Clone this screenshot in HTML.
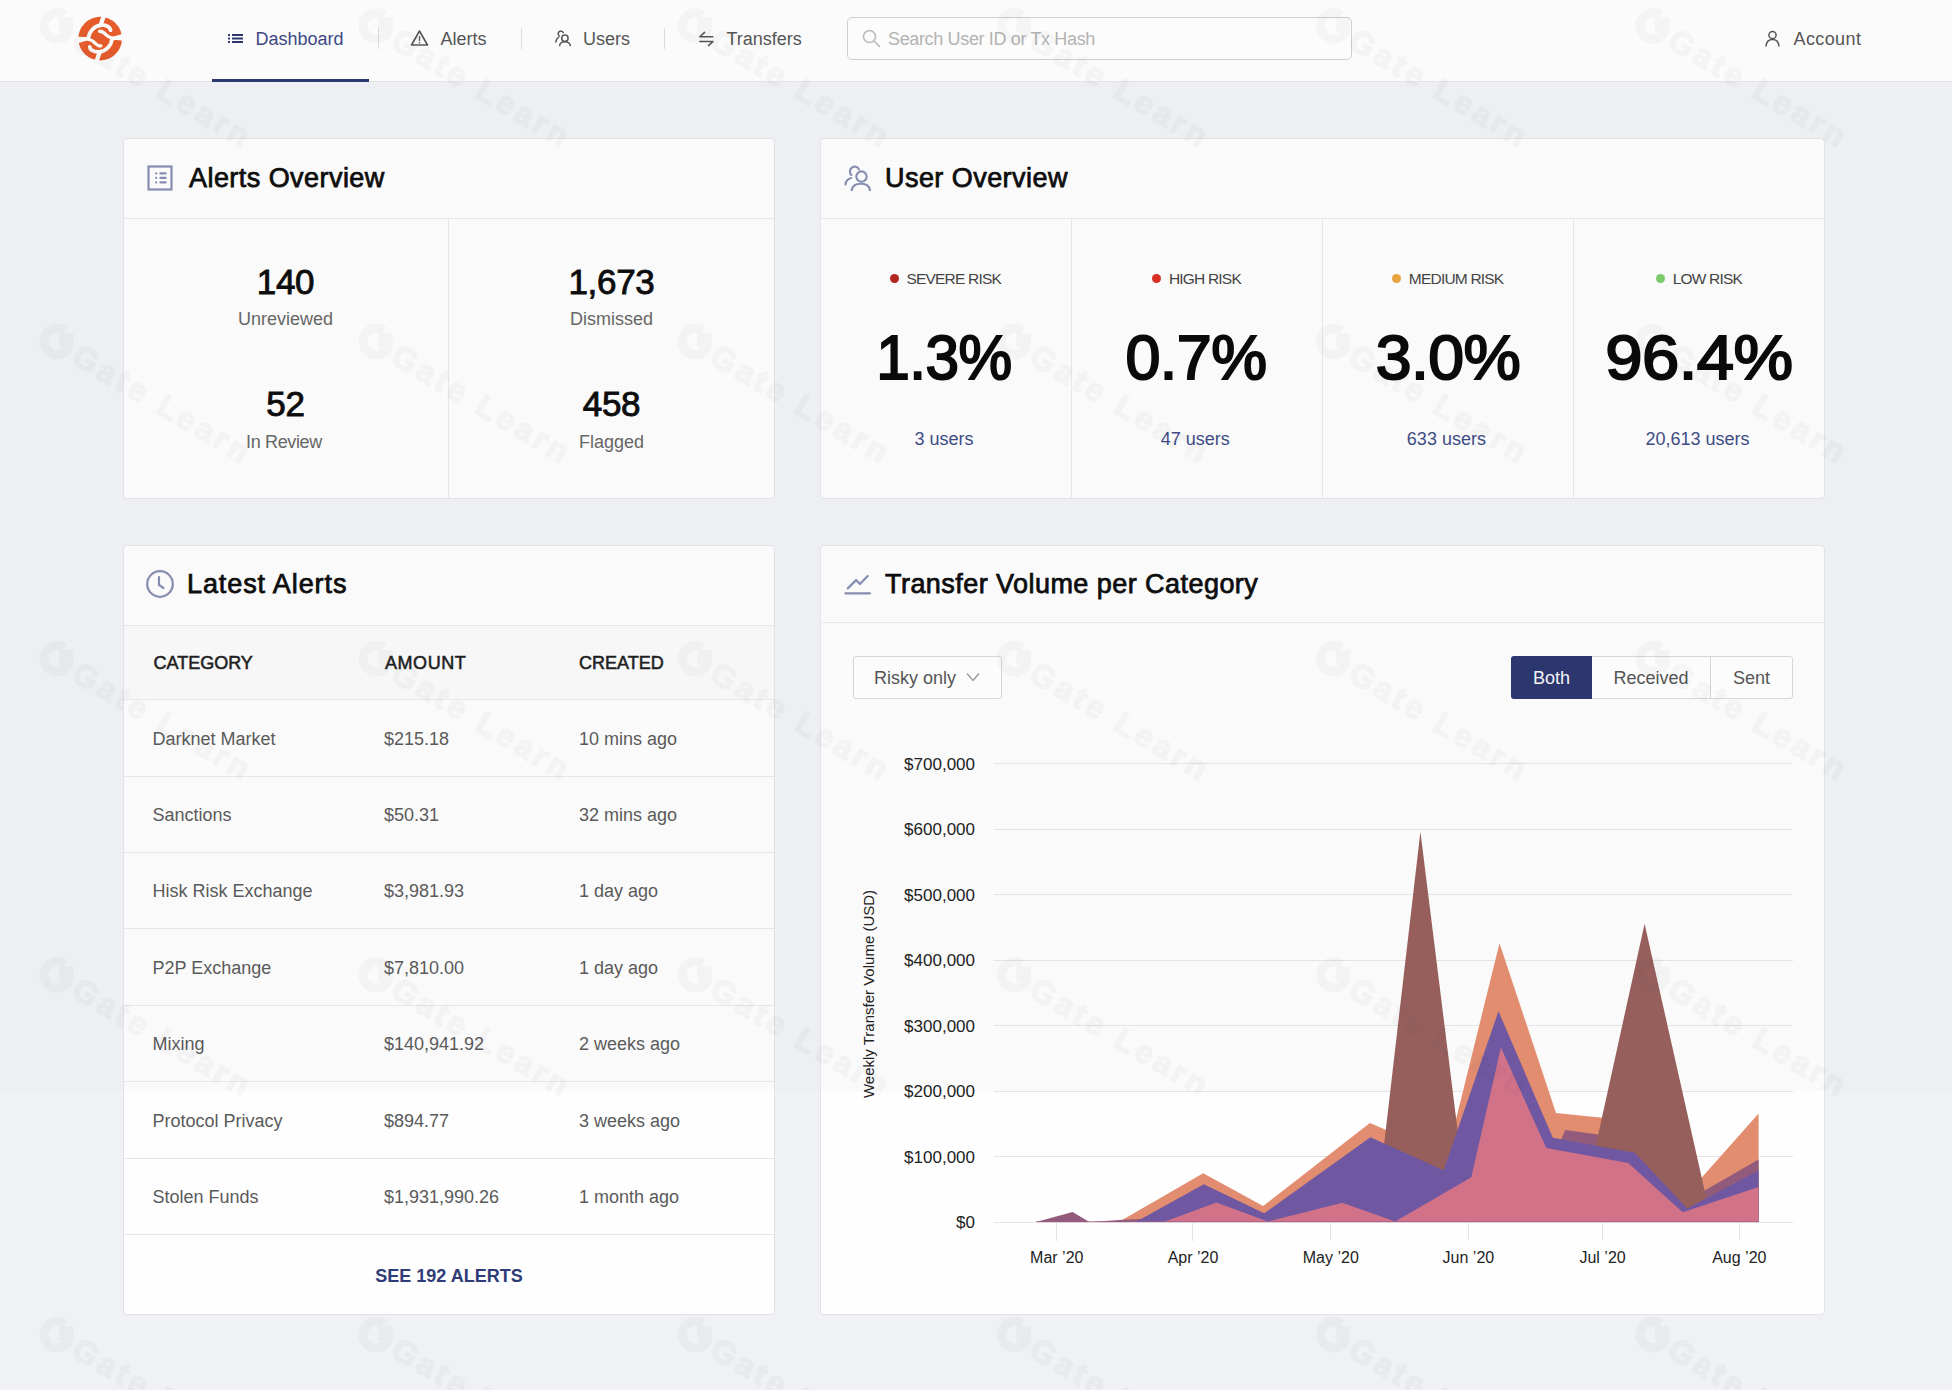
<!DOCTYPE html>
<html><head><meta charset="utf-8"><style>
html,body{margin:0;padding:0;}
body{width:1952px;height:1390px;overflow:hidden;position:relative;background:linear-gradient(#eeeff2 0 1090px, #f0f1f4 1090px);font-family:"Liberation Sans", sans-serif;}
.t{position:absolute;white-space:nowrap;font-family:"Liberation Sans", sans-serif;}
.r{position:absolute;}
</style></head><body>
<div class="r" style="left:0px;top:0px;width:1952px;height:81px;background:#fbfbfb;"></div>
<div class="r" style="left:0px;top:81px;width:1952px;height:1px;background:#e3e4e7;"></div>
<div class="r" style="left:212px;top:79px;width:157px;height:3px;background:#2c3770;"></div>
<svg class="r" style="left:76px;top:14px;width:48px;height:48px" viewBox="0 0 1390 1390">
<circle cx="700" cy="712" r="632" fill="#e55b2b"/>
<g fill="none" stroke="#fbfbfb" stroke-linecap="round"><path d="M805 50 L722 300" stroke-width="125"/>
<path d="M0 810 L360 700 C370 520 520 350 730 325 C880 315 990 380 1000 470" stroke-width="108"/>
<path d="M680 500 C770 490 830 560 890 620 C960 690 1100 725 1400 715" stroke-width="95"/><g transform="rotate(180 700 712)"><path d="M805 50 L722 300" stroke-width="125"/>
<path d="M0 810 L360 700 C370 520 520 350 730 325 C880 315 990 380 1000 470" stroke-width="108"/>
<path d="M680 500 C770 490 830 560 890 620 C960 690 1100 725 1400 715" stroke-width="95"/></g></g>
</svg>
<svg class="r" style="left:228px;top:33px;width:16px;height:11px" viewBox="0 0 16 11">
<g fill="#2c3770"><rect x="0" y="1" width="2" height="2"/><rect x="0" y="4.5" width="2" height="2"/><rect x="0" y="8" width="2" height="2"/>
<rect x="4" y="1" width="11" height="2"/><rect x="4" y="4.5" width="11" height="2"/><rect x="4" y="8" width="11" height="2"/></g></svg>
<div class="t" style="top:29.86px;font-size:18px;line-height:18px;color:#3b4883;font-weight:400;left:255.50px;">Dashboard</div>
<div class="r" style="left:378px;top:28px;width:1px;height:21px;background:#dcdcdc;"></div>
<svg class="r" style="left:410px;top:29px;width:19px;height:18px" viewBox="0 0 19 18">
<path d="M9.5 2 L17.5 16 L1.5 16 Z" fill="none" stroke="#555" stroke-width="1.6" stroke-linejoin="round"/>
<rect x="8.8" y="7" width="1.4" height="5" fill="#555"/><rect x="8.8" y="13" width="1.4" height="1.4" fill="#555"/></svg>
<div class="t" style="top:30.26px;font-size:18px;line-height:18px;color:#555;font-weight:400;left:440.50px;">Alerts</div>
<div class="r" style="left:521px;top:28px;width:1px;height:21px;background:#dcdcdc;"></div>
<svg class="r" style="left:554px;top:29px;width:19px;height:18px" viewBox="0 0 19 18">
<g fill="none" stroke="#555" stroke-width="1.5" stroke-linecap="round">
<path d="M9.3 3.6 A2.7 2.7 0 1 0 5.2 6.9"/><path d="M1.7 13 C2.3 10.6 3.3 9 4.7 8.2"/>
<circle cx="10.9" cy="9.2" r="3.2"/><path d="M5.6 16.6 C6 13.9 8 12.7 10.9 12.7 C13.8 12.7 15.8 13.9 16.3 16.6"/></g></svg>
<div class="t" style="top:29.86px;font-size:18px;line-height:18px;color:#555;font-weight:400;left:583.00px;">Users</div>
<div class="r" style="left:664px;top:28px;width:1px;height:21px;background:#dcdcdc;"></div>
<svg class="r" style="left:698px;top:30px;width:17px;height:17px" viewBox="0 0 17 17">
<g fill="none" stroke="#555" stroke-width="1.5" stroke-linecap="round" stroke-linejoin="round">
<path d="M6.6 2.4 L1.8 6.8 H14.9"/><path d="M10.5 15.6 L14.9 11.6 H1.8"/></g></svg>
<div class="t" style="top:29.86px;font-size:18px;line-height:18px;color:#555;font-weight:400;left:726.50px;">Transfers</div>
<div class="r" style="left:847px;top:17px;width:505px;height:43px;background:#fcfcfc;border:1px solid #cfcfcf;box-sizing:border-box;border-radius:5px;"></div>
<svg class="r" style="left:861px;top:28px;width:22px;height:22px" viewBox="0 0 22 22">
<g fill="none" stroke="#b9b9b9" stroke-width="1.6" stroke-linecap="round"><circle cx="8.5" cy="8.5" r="6"/><path d="M13 13 L18.5 18.5"/></g></svg>
<div class="t" style="top:29.86px;font-size:18px;line-height:18px;color:#b3b3b3;font-weight:400;letter-spacing:-0.35px;left:888.00px;">Search User ID or Tx Hash</div>
<svg class="r" style="left:1763px;top:29px;width:19px;height:18px" viewBox="0 0 19 18">
<g fill="none" stroke="#555" stroke-width="1.5" stroke-linecap="round"><circle cx="9.5" cy="6" r="3.6"/><path d="M3 17 C3.5 12.5 6 10.5 9.5 10.5 C13 10.5 15.5 12.5 16 17"/></g></svg>
<div class="t" style="top:29.86px;font-size:18px;line-height:18px;color:#555;font-weight:400;letter-spacing:0.4px;left:1793.50px;">Account</div>
<div class="r" style="left:123px;top:138px;width:652px;height:361px;background:#fafafa;border:1px solid #e2e3e6;box-sizing:border-box;border-radius:4px;"></div>
<div class="r" style="left:124px;top:218px;width:650px;height:1px;background:#e6e7e9;"></div>
<div class="r" style="left:448px;top:219px;width:1px;height:279px;background:#e6e7e9;"></div>
<svg class="r" style="left:146px;top:164px;width:28px;height:28px" viewBox="0 0 28 28">
<rect x="2.5" y="2.5" width="23" height="23" fill="none" stroke="#868db0" stroke-width="2.2"/>
<g stroke="#868db0" stroke-width="2.1" stroke-linecap="round"><path d="M10.1 9.4 h0.1 M10.1 13.9 h0.1 M10.1 18.4 h0.1"/><path d="M14.4 9.4 H19.7 M14.4 13.9 H19.7 M14.4 18.4 H19.7"/></g></svg>
<div class="t" style="top:164.54px;font-size:27px;line-height:27px;color:#0d0d0d;font-weight:400;letter-spacing:0.45px;left:189.00px;-webkit-text-stroke:0.75px #0d0d0d;">Alerts Overview</div>
<div class="t" style="top:264.07px;font-size:35px;line-height:35px;color:#0d0d0d;font-weight:400;letter-spacing:-0.3px;left:135.50px;width:300px;text-align:center;-webkit-text-stroke:0.9px #0d0d0d;">140</div>
<div class="t" style="top:309.76px;font-size:18px;line-height:18px;color:#666;font-weight:400;left:135.50px;width:300px;text-align:center;">Unreviewed</div>
<div class="t" style="top:264.07px;font-size:35px;line-height:35px;color:#0d0d0d;font-weight:400;letter-spacing:-0.3px;left:461.50px;width:300px;text-align:center;-webkit-text-stroke:0.9px #0d0d0d;">1,673</div>
<div class="t" style="top:309.76px;font-size:18px;line-height:18px;color:#666;font-weight:400;left:461.50px;width:300px;text-align:center;">Dismissed</div>
<div class="t" style="top:386.47px;font-size:35px;line-height:35px;color:#0d0d0d;font-weight:400;letter-spacing:-0.3px;left:135.50px;width:300px;text-align:center;-webkit-text-stroke:0.9px #0d0d0d;">52</div>
<div class="t" style="top:432.76px;font-size:18px;line-height:18px;color:#666;font-weight:400;letter-spacing:-0.35px;left:134.00px;width:300px;text-align:center;">In Review</div>
<div class="t" style="top:386.47px;font-size:35px;line-height:35px;color:#0d0d0d;font-weight:400;letter-spacing:-0.3px;left:461.50px;width:300px;text-align:center;-webkit-text-stroke:0.9px #0d0d0d;">458</div>
<div class="t" style="top:432.76px;font-size:18px;line-height:18px;color:#666;font-weight:400;left:461.50px;width:300px;text-align:center;">Flagged</div>
<div class="r" style="left:820px;top:138px;width:1005px;height:361px;background:#fafafa;border:1px solid #e2e3e6;box-sizing:border-box;border-radius:4px;"></div>
<div class="r" style="left:821px;top:218px;width:1003px;height:1px;background:#e6e7e9;"></div>
<div class="r" style="left:1071px;top:219px;width:1px;height:279px;background:#e6e7e9;"></div>
<div class="r" style="left:1322px;top:219px;width:1px;height:279px;background:#e6e7e9;"></div>
<div class="r" style="left:1573px;top:219px;width:1px;height:279px;background:#e6e7e9;"></div>
<svg class="r" style="left:843px;top:164px;width:30px;height:28px" viewBox="0 0 30 28">
<g fill="none" stroke="#868db0" stroke-width="2.1" stroke-linecap="round">
<path d="M16 5.4 A4.8 4.8 0 1 0 8.3 10.9"/><path d="M2.4 20.5 C3 16.8 5.2 14.6 8.2 14"/>
<circle cx="18.5" cy="12.6" r="5.2"/><path d="M8.7 26.2 C9.3 21.8 13 19.7 18 19.7 C23 19.7 26.4 21.8 27 26.2"/></g></svg>
<div class="t" style="top:164.54px;font-size:27px;line-height:27px;color:#0d0d0d;font-weight:400;letter-spacing:0.45px;left:885.00px;-webkit-text-stroke:0.75px #0d0d0d;">User Overview</div>
<div class="t" style="left:795.5px;width:300px;text-align:center;top:271.38px;font-size:15.5px;line-height:15.5px;color:#444;letter-spacing:-0.8px"><span style="display:inline-block;width:9px;height:9px;border-radius:50%;background:#b3261e;margin-right:7.5px;vertical-align:1px"></span>SEVERE RISK</div>
<div class="t" style="top:326.27px;font-size:63px;line-height:63px;color:#0a0a0a;font-weight:400;letter-spacing:-0.5px;left:794.00px;width:300px;text-align:center;-webkit-text-stroke:2px #0a0a0a;transform:scaleX(0.958);">1.3%</div>
<div class="t" style="top:429.76px;font-size:18px;line-height:18px;color:#3e4c85;font-weight:400;left:794.00px;width:300px;text-align:center;">3 users</div>
<div class="t" style="left:1046.7px;width:300px;text-align:center;top:271.38px;font-size:15.5px;line-height:15.5px;color:#444;letter-spacing:-0.8px"><span style="display:inline-block;width:9px;height:9px;border-radius:50%;background:#d93025;margin-right:7.5px;vertical-align:1px"></span>HIGH RISK</div>
<div class="t" style="top:326.27px;font-size:63px;line-height:63px;color:#0a0a0a;font-weight:400;letter-spacing:-0.5px;left:1046.40px;width:300px;text-align:center;-webkit-text-stroke:2px #0a0a0a;transform:scaleX(0.997);">0.7%</div>
<div class="t" style="top:429.76px;font-size:18px;line-height:18px;color:#3e4c85;font-weight:400;left:1045.20px;width:300px;text-align:center;">47 users</div>
<div class="t" style="left:1297.9px;width:300px;text-align:center;top:271.38px;font-size:15.5px;line-height:15.5px;color:#444;letter-spacing:-0.8px"><span style="display:inline-block;width:9px;height:9px;border-radius:50%;background:#e8a33d;margin-right:7.5px;vertical-align:1px"></span>MEDIUM RISK</div>
<div class="t" style="top:326.27px;font-size:63px;line-height:63px;color:#0a0a0a;font-weight:400;letter-spacing:-0.5px;left:1298.30px;width:300px;text-align:center;-webkit-text-stroke:2px #0a0a0a;transform:scaleX(1.022);">3.0%</div>
<div class="t" style="top:429.76px;font-size:18px;line-height:18px;color:#3e4c85;font-weight:400;left:1296.40px;width:300px;text-align:center;">633 users</div>
<div class="t" style="left:1549.1px;width:300px;text-align:center;top:271.38px;font-size:15.5px;line-height:15.5px;color:#444;letter-spacing:-0.8px"><span style="display:inline-block;width:9px;height:9px;border-radius:50%;background:#7cc96b;margin-right:7.5px;vertical-align:1px"></span>LOW RISK</div>
<div class="t" style="top:326.27px;font-size:63px;line-height:63px;color:#0a0a0a;font-weight:400;letter-spacing:-0.5px;left:1548.60px;width:300px;text-align:center;-webkit-text-stroke:2px #0a0a0a;transform:scaleX(1.063);">96.4%</div>
<div class="t" style="top:429.76px;font-size:18px;line-height:18px;color:#3e4c85;font-weight:400;left:1547.60px;width:300px;text-align:center;">20,613 users</div>
<div class="r" style="left:123px;top:545px;width:652px;height:770px;background:linear-gradient(#fafafa 0 545px, #fefefe 545px);border:1px solid #e2e3e6;box-sizing:border-box;border-radius:4px;"></div>
<div class="r" style="left:124px;top:625px;width:650px;height:1px;background:#e6e7e9;"></div>
<div class="r" style="left:124px;top:626px;width:650px;height:74px;background:#f7f7f7;"></div>
<svg class="r" style="left:145px;top:569px;width:30px;height:30px" viewBox="0 0 30 30">
<g fill="none" stroke="#868db0" stroke-width="2.2" stroke-linecap="round"><circle cx="15" cy="15" r="12.8"/><path d="M14 8 V16 L18.5 19"/></g></svg>
<div class="t" style="top:571.14px;font-size:27px;line-height:27px;color:#0d0d0d;font-weight:400;letter-spacing:0.9px;left:187.00px;-webkit-text-stroke:0.75px #0d0d0d;">Latest Alerts</div>
<div class="t" style="top:654.46px;font-size:18px;line-height:18px;color:#1f1f1f;font-weight:400;left:153.50px;-webkit-text-stroke:0.55px #1f1f1f;">CATEGORY</div>
<div class="t" style="top:654.46px;font-size:18px;line-height:18px;color:#1f1f1f;font-weight:400;letter-spacing:0.55px;left:385.00px;-webkit-text-stroke:0.55px #1f1f1f;">AMOUNT</div>
<div class="t" style="top:654.46px;font-size:18px;line-height:18px;color:#1f1f1f;font-weight:400;left:579.00px;-webkit-text-stroke:0.55px #1f1f1f;">CREATED</div>
<div class="r" style="left:124px;top:699px;width:650px;height:1px;background:#e6e7e9;"></div>
<div class="t" style="top:729.56px;font-size:18px;line-height:18px;color:#5a5a5a;font-weight:400;left:152.50px;">Darknet Market</div>
<div class="t" style="top:729.56px;font-size:18px;line-height:18px;color:#5a5a5a;font-weight:400;left:384.00px;">$215.18</div>
<div class="t" style="top:729.56px;font-size:18px;line-height:18px;color:#5a5a5a;font-weight:400;left:579.00px;">10 mins ago</div>
<div class="r" style="left:124px;top:776px;width:650px;height:1px;background:#e6e7e9;"></div>
<div class="t" style="top:805.96px;font-size:18px;line-height:18px;color:#5a5a5a;font-weight:400;left:152.50px;">Sanctions</div>
<div class="t" style="top:805.96px;font-size:18px;line-height:18px;color:#5a5a5a;font-weight:400;left:384.00px;">$50.31</div>
<div class="t" style="top:805.96px;font-size:18px;line-height:18px;color:#5a5a5a;font-weight:400;left:579.00px;">32 mins ago</div>
<div class="r" style="left:124px;top:852px;width:650px;height:1px;background:#e6e7e9;"></div>
<div class="t" style="top:882.36px;font-size:18px;line-height:18px;color:#5a5a5a;font-weight:400;left:152.50px;">Hisk Risk Exchange</div>
<div class="t" style="top:882.36px;font-size:18px;line-height:18px;color:#5a5a5a;font-weight:400;left:384.00px;">$3,981.93</div>
<div class="t" style="top:882.36px;font-size:18px;line-height:18px;color:#5a5a5a;font-weight:400;left:579.00px;">1 day ago</div>
<div class="r" style="left:124px;top:928px;width:650px;height:1px;background:#e6e7e9;"></div>
<div class="t" style="top:958.76px;font-size:18px;line-height:18px;color:#5a5a5a;font-weight:400;left:152.50px;">P2P Exchange</div>
<div class="t" style="top:958.76px;font-size:18px;line-height:18px;color:#5a5a5a;font-weight:400;left:384.00px;">$7,810.00</div>
<div class="t" style="top:958.76px;font-size:18px;line-height:18px;color:#5a5a5a;font-weight:400;left:579.00px;">1 day ago</div>
<div class="r" style="left:124px;top:1005px;width:650px;height:1px;background:#e6e7e9;"></div>
<div class="t" style="top:1035.16px;font-size:18px;line-height:18px;color:#5a5a5a;font-weight:400;left:152.50px;">Mixing</div>
<div class="t" style="top:1035.16px;font-size:18px;line-height:18px;color:#5a5a5a;font-weight:400;left:384.00px;">$140,941.92</div>
<div class="t" style="top:1035.16px;font-size:18px;line-height:18px;color:#5a5a5a;font-weight:400;left:579.00px;">2 weeks ago</div>
<div class="r" style="left:124px;top:1081px;width:650px;height:1px;background:#e6e7e9;"></div>
<div class="t" style="top:1111.56px;font-size:18px;line-height:18px;color:#5a5a5a;font-weight:400;left:152.50px;">Protocol Privacy</div>
<div class="t" style="top:1111.56px;font-size:18px;line-height:18px;color:#5a5a5a;font-weight:400;left:384.00px;">$894.77</div>
<div class="t" style="top:1111.56px;font-size:18px;line-height:18px;color:#5a5a5a;font-weight:400;left:579.00px;">3 weeks ago</div>
<div class="r" style="left:124px;top:1158px;width:650px;height:1px;background:#e6e7e9;"></div>
<div class="t" style="top:1187.96px;font-size:18px;line-height:18px;color:#5a5a5a;font-weight:400;left:152.50px;">Stolen Funds</div>
<div class="t" style="top:1187.96px;font-size:18px;line-height:18px;color:#5a5a5a;font-weight:400;left:384.00px;">$1,931,990.26</div>
<div class="t" style="top:1187.96px;font-size:18px;line-height:18px;color:#5a5a5a;font-weight:400;left:579.00px;">1 month ago</div>
<div class="r" style="left:124px;top:1234px;width:650px;height:1px;background:#e6e7e9;"></div>
<div class="t" style="top:1266.76px;font-size:18px;line-height:18px;color:#2f3c78;font-weight:700;left:299.00px;width:300px;text-align:center;">SEE 192 ALERTS</div>
<div class="r" style="left:820px;top:545px;width:1005px;height:770px;background:linear-gradient(#fafafa 0 545px, #fefefe 545px);border:1px solid #e2e3e6;box-sizing:border-box;border-radius:4px;"></div>
<div class="r" style="left:821px;top:622px;width:1003px;height:1px;background:#e6e7e9;"></div>
<svg class="r" style="left:843px;top:570px;width:30px;height:28px" viewBox="0 0 30 28">
<g fill="none" stroke="#868db0" stroke-width="2.2" stroke-linecap="round" stroke-linejoin="round"><path d="M4.8 18.4 L13.1 10.1 L16.9 14.1 L24.7 6.1"/><path d="M2.4 23.3 H27"/></g></svg>
<div class="t" style="top:571.14px;font-size:27px;line-height:27px;color:#0d0d0d;font-weight:400;letter-spacing:0.45px;left:885.00px;-webkit-text-stroke:0.75px #0d0d0d;">Transfer Volume per Category</div>
<div class="r" style="left:853px;top:656px;width:149px;height:43px;background:#fcfcfc;border:1px solid #d6d6d6;box-sizing:border-box;border-radius:3px;"></div>
<div class="t" style="top:669.06px;font-size:18px;line-height:18px;color:#555;font-weight:400;left:874.00px;">Risky only</div>
<svg class="r" style="left:965px;top:671px;width:16px;height:12px" viewBox="0 0 16 12">
<path d="M2 2.5 L8 9.5 L14 2.5" fill="none" stroke="#999" stroke-width="1.3"/></svg>
<div class="r" style="left:1511px;top:656px;width:282px;height:43px;background:#fcfcfc;border:1px solid #d6d6d6;box-sizing:border-box;border-radius:3px;"></div>
<div class="r" style="left:1511px;top:656px;width:81px;height:43px;background:#2c3770;border-radius:3px;border-top-right-radius:0;border-bottom-right-radius:0;"></div>
<div class="r" style="left:1710px;top:657px;width:1px;height:41px;background:#d6d6d6;"></div>
<div class="t" style="top:669.06px;font-size:18px;line-height:18px;color:#f4f4f4;font-weight:400;left:1491.50px;width:120px;text-align:center;">Both</div>
<div class="t" style="top:669.06px;font-size:18px;line-height:18px;color:#555;font-weight:400;left:1576.00px;width:150px;text-align:center;">Received</div>
<div class="t" style="top:669.06px;font-size:18px;line-height:18px;color:#555;font-weight:400;left:1691.50px;width:120px;text-align:center;">Sent</div>
<div class="r" style="left:994px;top:1222px;width:799px;height:1px;background:#e4e4e4;"></div>
<div class="t" style="top:1214.21px;font-size:17px;line-height:17px;color:#222;font-weight:400;left:825.00px;width:150px;text-align:right;">$0</div>
<div class="r" style="left:994px;top:1156px;width:799px;height:1px;background:#e4e4e4;"></div>
<div class="t" style="top:1148.68px;font-size:17px;line-height:17px;color:#222;font-weight:400;left:825.00px;width:150px;text-align:right;">$100,000</div>
<div class="r" style="left:994px;top:1091px;width:799px;height:1px;background:#e4e4e4;"></div>
<div class="t" style="top:1083.15px;font-size:17px;line-height:17px;color:#222;font-weight:400;left:825.00px;width:150px;text-align:right;">$200,000</div>
<div class="r" style="left:994px;top:1025px;width:799px;height:1px;background:#e4e4e4;"></div>
<div class="t" style="top:1017.62px;font-size:17px;line-height:17px;color:#222;font-weight:400;left:825.00px;width:150px;text-align:right;">$300,000</div>
<div class="r" style="left:994px;top:960px;width:799px;height:1px;background:#e4e4e4;"></div>
<div class="t" style="top:952.09px;font-size:17px;line-height:17px;color:#222;font-weight:400;left:825.00px;width:150px;text-align:right;">$400,000</div>
<div class="r" style="left:994px;top:894px;width:799px;height:1px;background:#e4e4e4;"></div>
<div class="t" style="top:886.56px;font-size:17px;line-height:17px;color:#222;font-weight:400;left:825.00px;width:150px;text-align:right;">$500,000</div>
<div class="r" style="left:994px;top:829px;width:799px;height:1px;background:#e4e4e4;"></div>
<div class="t" style="top:821.03px;font-size:17px;line-height:17px;color:#222;font-weight:400;left:825.00px;width:150px;text-align:right;">$600,000</div>
<div class="r" style="left:994px;top:763px;width:799px;height:1px;background:#e4e4e4;"></div>
<div class="t" style="top:755.50px;font-size:17px;line-height:17px;color:#222;font-weight:400;left:825.00px;width:150px;text-align:right;">$700,000</div>
<div class="r" style="left:1056px;top:1223px;width:1px;height:18px;background:#e4e4e4;"></div>
<div class="t" style="top:1250.46px;font-size:16px;line-height:16px;color:#222;font-weight:400;left:996.80px;width:120px;text-align:center;">Mar ’20</div>
<div class="r" style="left:1192px;top:1223px;width:1px;height:18px;background:#e4e4e4;"></div>
<div class="t" style="top:1250.46px;font-size:16px;line-height:16px;color:#222;font-weight:400;left:1133.00px;width:120px;text-align:center;">Apr ’20</div>
<div class="r" style="left:1330px;top:1223px;width:1px;height:18px;background:#e4e4e4;"></div>
<div class="t" style="top:1250.46px;font-size:16px;line-height:16px;color:#222;font-weight:400;left:1270.80px;width:120px;text-align:center;">May ’20</div>
<div class="r" style="left:1468px;top:1223px;width:1px;height:18px;background:#e4e4e4;"></div>
<div class="t" style="top:1250.46px;font-size:16px;line-height:16px;color:#222;font-weight:400;left:1408.40px;width:120px;text-align:center;">Jun ’20</div>
<div class="r" style="left:1602px;top:1223px;width:1px;height:18px;background:#e4e4e4;"></div>
<div class="t" style="top:1250.46px;font-size:16px;line-height:16px;color:#222;font-weight:400;left:1542.60px;width:120px;text-align:center;">Jul ’20</div>
<div class="r" style="left:1739px;top:1223px;width:1px;height:18px;background:#e4e4e4;"></div>
<div class="t" style="top:1250.46px;font-size:16px;line-height:16px;color:#222;font-weight:400;left:1679.30px;width:120px;text-align:center;">Aug ’20</div>
<div class="t" style="left:718.5px;top:985.5px;width:300px;height:16px;font-size:15px;line-height:16px;text-align:center;color:#222;transform:rotate(-90deg)">Weekly Transfer Volume (USD)</div>
<svg class="r" style="left:0;top:0;width:1952px;height:1390px" viewBox="0 0 1952 1390"><polygon points="1091.0,1222.0 1119.6,1222.0 1122.6,1219.7 1203.2,1173.3 1263.1,1206.1 1369.9,1122.9 1447.0,1156.0 1499.5,943.3 1556.0,1112.9 1602.4,1117.8 1688.0,1193.0 1758.6,1113.6 1758.6,1222.0" fill="#e28d70"/><polygon points="1036.0,1222.0 1072.6,1212.0 1089.4,1222.0 1091.0,1222.0 1122.6,1219.7 1139.0,1219.0 1500.0,1218.0 1552.0,1160.0 1565.2,1129.9 1598.0,1134.5 1690.0,1199.0 1758.6,1159.4 1758.6,1222.0" fill="#935b7b"/><polygon points="1370.0,1222.0 1375.1,1222.0 1420.4,831.7 1469.0,1222.0 1579.0,1222.0 1644.6,923.7 1711.7,1222.0" fill="#965f5b"/><polygon points="1135.7,1222.0 1203.8,1184.3 1264.2,1213.3 1370.4,1137.3 1443.6,1170.3 1498.5,1011.3 1552.8,1137.7 1634.8,1152.8 1687.2,1208.6 1758.6,1170.4 1758.6,1222.0" fill="#6f58a1"/><polygon points="1163.6,1222.0 1216.5,1202.6 1267.9,1221.5 1342.3,1202.7 1395.2,1221.5 1471.3,1177.3 1500.9,1047.6 1546.3,1148.0 1628.3,1163.1 1682.7,1212.2 1758.6,1187.0 1758.6,1222.0" fill="#d17289"/><rect x="1036" y="1221" width="723" height="1.2" fill="#a05a86" opacity="0.6"/></svg>
<svg class="r" style="left:0;top:0;width:1952px;height:1390px;pointer-events:none" viewBox="0 0 1952 1390"><g fill="#1e3246" stroke="#1e3246" opacity="0.032"><g transform="translate(39.7,6.6)"><path d="M25.1 8.3 A13.3 13.3 0 1 0 29.55 24.8" fill="none" stroke-width="9"/><rect x="19.2" y="10.7" width="14.6" height="14.7" stroke-width="0"/><text x="0" y="0" transform="translate(30,40) rotate(30.5)" font-family="Liberation Sans" font-weight="700" font-size="32" letter-spacing="3.6" stroke-width="1.6" stroke-linejoin="round">Gate Learn</text></g><g transform="translate(358.9,6.6)"><path d="M25.1 8.3 A13.3 13.3 0 1 0 29.55 24.8" fill="none" stroke-width="9"/><rect x="19.2" y="10.7" width="14.6" height="14.7" stroke-width="0"/><text x="0" y="0" transform="translate(30,40) rotate(30.5)" font-family="Liberation Sans" font-weight="700" font-size="32" letter-spacing="3.6" stroke-width="1.6" stroke-linejoin="round">Gate Learn</text></g><g transform="translate(678.1,6.6)"><path d="M25.1 8.3 A13.3 13.3 0 1 0 29.55 24.8" fill="none" stroke-width="9"/><rect x="19.2" y="10.7" width="14.6" height="14.7" stroke-width="0"/><text x="0" y="0" transform="translate(30,40) rotate(30.5)" font-family="Liberation Sans" font-weight="700" font-size="32" letter-spacing="3.6" stroke-width="1.6" stroke-linejoin="round">Gate Learn</text></g><g transform="translate(997.3,6.6)"><path d="M25.1 8.3 A13.3 13.3 0 1 0 29.55 24.8" fill="none" stroke-width="9"/><rect x="19.2" y="10.7" width="14.6" height="14.7" stroke-width="0"/><text x="0" y="0" transform="translate(30,40) rotate(30.5)" font-family="Liberation Sans" font-weight="700" font-size="32" letter-spacing="3.6" stroke-width="1.6" stroke-linejoin="round">Gate Learn</text></g><g transform="translate(1316.5,6.6)"><path d="M25.1 8.3 A13.3 13.3 0 1 0 29.55 24.8" fill="none" stroke-width="9"/><rect x="19.2" y="10.7" width="14.6" height="14.7" stroke-width="0"/><text x="0" y="0" transform="translate(30,40) rotate(30.5)" font-family="Liberation Sans" font-weight="700" font-size="32" letter-spacing="3.6" stroke-width="1.6" stroke-linejoin="round">Gate Learn</text></g><g transform="translate(1635.7,6.6)"><path d="M25.1 8.3 A13.3 13.3 0 1 0 29.55 24.8" fill="none" stroke-width="9"/><rect x="19.2" y="10.7" width="14.6" height="14.7" stroke-width="0"/><text x="0" y="0" transform="translate(30,40) rotate(30.5)" font-family="Liberation Sans" font-weight="700" font-size="32" letter-spacing="3.6" stroke-width="1.6" stroke-linejoin="round">Gate Learn</text></g><g transform="translate(39.7,322.3)"><path d="M25.1 8.3 A13.3 13.3 0 1 0 29.55 24.8" fill="none" stroke-width="9"/><rect x="19.2" y="10.7" width="14.6" height="14.7" stroke-width="0"/><text x="0" y="0" transform="translate(30,40) rotate(30.5)" font-family="Liberation Sans" font-weight="700" font-size="32" letter-spacing="3.6" stroke-width="1.6" stroke-linejoin="round">Gate Learn</text></g><g transform="translate(358.9,322.3)"><path d="M25.1 8.3 A13.3 13.3 0 1 0 29.55 24.8" fill="none" stroke-width="9"/><rect x="19.2" y="10.7" width="14.6" height="14.7" stroke-width="0"/><text x="0" y="0" transform="translate(30,40) rotate(30.5)" font-family="Liberation Sans" font-weight="700" font-size="32" letter-spacing="3.6" stroke-width="1.6" stroke-linejoin="round">Gate Learn</text></g><g transform="translate(678.1,322.3)"><path d="M25.1 8.3 A13.3 13.3 0 1 0 29.55 24.8" fill="none" stroke-width="9"/><rect x="19.2" y="10.7" width="14.6" height="14.7" stroke-width="0"/><text x="0" y="0" transform="translate(30,40) rotate(30.5)" font-family="Liberation Sans" font-weight="700" font-size="32" letter-spacing="3.6" stroke-width="1.6" stroke-linejoin="round">Gate Learn</text></g><g transform="translate(997.3,322.3)"><path d="M25.1 8.3 A13.3 13.3 0 1 0 29.55 24.8" fill="none" stroke-width="9"/><rect x="19.2" y="10.7" width="14.6" height="14.7" stroke-width="0"/><text x="0" y="0" transform="translate(30,40) rotate(30.5)" font-family="Liberation Sans" font-weight="700" font-size="32" letter-spacing="3.6" stroke-width="1.6" stroke-linejoin="round">Gate Learn</text></g><g transform="translate(1316.5,322.3)"><path d="M25.1 8.3 A13.3 13.3 0 1 0 29.55 24.8" fill="none" stroke-width="9"/><rect x="19.2" y="10.7" width="14.6" height="14.7" stroke-width="0"/><text x="0" y="0" transform="translate(30,40) rotate(30.5)" font-family="Liberation Sans" font-weight="700" font-size="32" letter-spacing="3.6" stroke-width="1.6" stroke-linejoin="round">Gate Learn</text></g><g transform="translate(1635.7,322.3)"><path d="M25.1 8.3 A13.3 13.3 0 1 0 29.55 24.8" fill="none" stroke-width="9"/><rect x="19.2" y="10.7" width="14.6" height="14.7" stroke-width="0"/><text x="0" y="0" transform="translate(30,40) rotate(30.5)" font-family="Liberation Sans" font-weight="700" font-size="32" letter-spacing="3.6" stroke-width="1.6" stroke-linejoin="round">Gate Learn</text></g><g transform="translate(39.7,639.4)"><path d="M25.1 8.3 A13.3 13.3 0 1 0 29.55 24.8" fill="none" stroke-width="9"/><rect x="19.2" y="10.7" width="14.6" height="14.7" stroke-width="0"/><text x="0" y="0" transform="translate(30,40) rotate(30.5)" font-family="Liberation Sans" font-weight="700" font-size="32" letter-spacing="3.6" stroke-width="1.6" stroke-linejoin="round">Gate Learn</text></g><g transform="translate(358.9,639.4)"><path d="M25.1 8.3 A13.3 13.3 0 1 0 29.55 24.8" fill="none" stroke-width="9"/><rect x="19.2" y="10.7" width="14.6" height="14.7" stroke-width="0"/><text x="0" y="0" transform="translate(30,40) rotate(30.5)" font-family="Liberation Sans" font-weight="700" font-size="32" letter-spacing="3.6" stroke-width="1.6" stroke-linejoin="round">Gate Learn</text></g><g transform="translate(678.1,639.4)"><path d="M25.1 8.3 A13.3 13.3 0 1 0 29.55 24.8" fill="none" stroke-width="9"/><rect x="19.2" y="10.7" width="14.6" height="14.7" stroke-width="0"/><text x="0" y="0" transform="translate(30,40) rotate(30.5)" font-family="Liberation Sans" font-weight="700" font-size="32" letter-spacing="3.6" stroke-width="1.6" stroke-linejoin="round">Gate Learn</text></g><g transform="translate(997.3,639.4)"><path d="M25.1 8.3 A13.3 13.3 0 1 0 29.55 24.8" fill="none" stroke-width="9"/><rect x="19.2" y="10.7" width="14.6" height="14.7" stroke-width="0"/><text x="0" y="0" transform="translate(30,40) rotate(30.5)" font-family="Liberation Sans" font-weight="700" font-size="32" letter-spacing="3.6" stroke-width="1.6" stroke-linejoin="round">Gate Learn</text></g><g transform="translate(1316.5,639.4)"><path d="M25.1 8.3 A13.3 13.3 0 1 0 29.55 24.8" fill="none" stroke-width="9"/><rect x="19.2" y="10.7" width="14.6" height="14.7" stroke-width="0"/><text x="0" y="0" transform="translate(30,40) rotate(30.5)" font-family="Liberation Sans" font-weight="700" font-size="32" letter-spacing="3.6" stroke-width="1.6" stroke-linejoin="round">Gate Learn</text></g><g transform="translate(1635.7,639.4)"><path d="M25.1 8.3 A13.3 13.3 0 1 0 29.55 24.8" fill="none" stroke-width="9"/><rect x="19.2" y="10.7" width="14.6" height="14.7" stroke-width="0"/><text x="0" y="0" transform="translate(30,40) rotate(30.5)" font-family="Liberation Sans" font-weight="700" font-size="32" letter-spacing="3.6" stroke-width="1.6" stroke-linejoin="round">Gate Learn</text></g><g transform="translate(39.7,955.6)"><path d="M25.1 8.3 A13.3 13.3 0 1 0 29.55 24.8" fill="none" stroke-width="9"/><rect x="19.2" y="10.7" width="14.6" height="14.7" stroke-width="0"/><text x="0" y="0" transform="translate(30,40) rotate(30.5)" font-family="Liberation Sans" font-weight="700" font-size="32" letter-spacing="3.6" stroke-width="1.6" stroke-linejoin="round">Gate Learn</text></g><g transform="translate(358.9,955.6)"><path d="M25.1 8.3 A13.3 13.3 0 1 0 29.55 24.8" fill="none" stroke-width="9"/><rect x="19.2" y="10.7" width="14.6" height="14.7" stroke-width="0"/><text x="0" y="0" transform="translate(30,40) rotate(30.5)" font-family="Liberation Sans" font-weight="700" font-size="32" letter-spacing="3.6" stroke-width="1.6" stroke-linejoin="round">Gate Learn</text></g><g transform="translate(678.1,955.6)"><path d="M25.1 8.3 A13.3 13.3 0 1 0 29.55 24.8" fill="none" stroke-width="9"/><rect x="19.2" y="10.7" width="14.6" height="14.7" stroke-width="0"/><text x="0" y="0" transform="translate(30,40) rotate(30.5)" font-family="Liberation Sans" font-weight="700" font-size="32" letter-spacing="3.6" stroke-width="1.6" stroke-linejoin="round">Gate Learn</text></g><g transform="translate(997.3,955.6)"><path d="M25.1 8.3 A13.3 13.3 0 1 0 29.55 24.8" fill="none" stroke-width="9"/><rect x="19.2" y="10.7" width="14.6" height="14.7" stroke-width="0"/><text x="0" y="0" transform="translate(30,40) rotate(30.5)" font-family="Liberation Sans" font-weight="700" font-size="32" letter-spacing="3.6" stroke-width="1.6" stroke-linejoin="round">Gate Learn</text></g><g transform="translate(1316.5,955.6)"><path d="M25.1 8.3 A13.3 13.3 0 1 0 29.55 24.8" fill="none" stroke-width="9"/><rect x="19.2" y="10.7" width="14.6" height="14.7" stroke-width="0"/><text x="0" y="0" transform="translate(30,40) rotate(30.5)" font-family="Liberation Sans" font-weight="700" font-size="32" letter-spacing="3.6" stroke-width="1.6" stroke-linejoin="round">Gate Learn</text></g><g transform="translate(1635.7,955.6)"><path d="M25.1 8.3 A13.3 13.3 0 1 0 29.55 24.8" fill="none" stroke-width="9"/><rect x="19.2" y="10.7" width="14.6" height="14.7" stroke-width="0"/><text x="0" y="0" transform="translate(30,40) rotate(30.5)" font-family="Liberation Sans" font-weight="700" font-size="32" letter-spacing="3.6" stroke-width="1.6" stroke-linejoin="round">Gate Learn</text></g><g transform="translate(39.7,1315.5)"><path d="M25.1 8.3 A13.3 13.3 0 1 0 29.55 24.8" fill="none" stroke-width="9"/><rect x="19.2" y="10.7" width="14.6" height="14.7" stroke-width="0"/><text x="0" y="0" transform="translate(30,40) rotate(30.5)" font-family="Liberation Sans" font-weight="700" font-size="32" letter-spacing="3.6" stroke-width="1.6" stroke-linejoin="round">Gate Learn</text></g><g transform="translate(358.9,1315.5)"><path d="M25.1 8.3 A13.3 13.3 0 1 0 29.55 24.8" fill="none" stroke-width="9"/><rect x="19.2" y="10.7" width="14.6" height="14.7" stroke-width="0"/><text x="0" y="0" transform="translate(30,40) rotate(30.5)" font-family="Liberation Sans" font-weight="700" font-size="32" letter-spacing="3.6" stroke-width="1.6" stroke-linejoin="round">Gate Learn</text></g><g transform="translate(678.1,1315.5)"><path d="M25.1 8.3 A13.3 13.3 0 1 0 29.55 24.8" fill="none" stroke-width="9"/><rect x="19.2" y="10.7" width="14.6" height="14.7" stroke-width="0"/><text x="0" y="0" transform="translate(30,40) rotate(30.5)" font-family="Liberation Sans" font-weight="700" font-size="32" letter-spacing="3.6" stroke-width="1.6" stroke-linejoin="round">Gate Learn</text></g><g transform="translate(997.3,1315.5)"><path d="M25.1 8.3 A13.3 13.3 0 1 0 29.55 24.8" fill="none" stroke-width="9"/><rect x="19.2" y="10.7" width="14.6" height="14.7" stroke-width="0"/><text x="0" y="0" transform="translate(30,40) rotate(30.5)" font-family="Liberation Sans" font-weight="700" font-size="32" letter-spacing="3.6" stroke-width="1.6" stroke-linejoin="round">Gate Learn</text></g><g transform="translate(1316.5,1315.5)"><path d="M25.1 8.3 A13.3 13.3 0 1 0 29.55 24.8" fill="none" stroke-width="9"/><rect x="19.2" y="10.7" width="14.6" height="14.7" stroke-width="0"/><text x="0" y="0" transform="translate(30,40) rotate(30.5)" font-family="Liberation Sans" font-weight="700" font-size="32" letter-spacing="3.6" stroke-width="1.6" stroke-linejoin="round">Gate Learn</text></g><g transform="translate(1635.7,1315.5)"><path d="M25.1 8.3 A13.3 13.3 0 1 0 29.55 24.8" fill="none" stroke-width="9"/><rect x="19.2" y="10.7" width="14.6" height="14.7" stroke-width="0"/><text x="0" y="0" transform="translate(30,40) rotate(30.5)" font-family="Liberation Sans" font-weight="700" font-size="32" letter-spacing="3.6" stroke-width="1.6" stroke-linejoin="round">Gate Learn</text></g></g></svg>

</body></html>
